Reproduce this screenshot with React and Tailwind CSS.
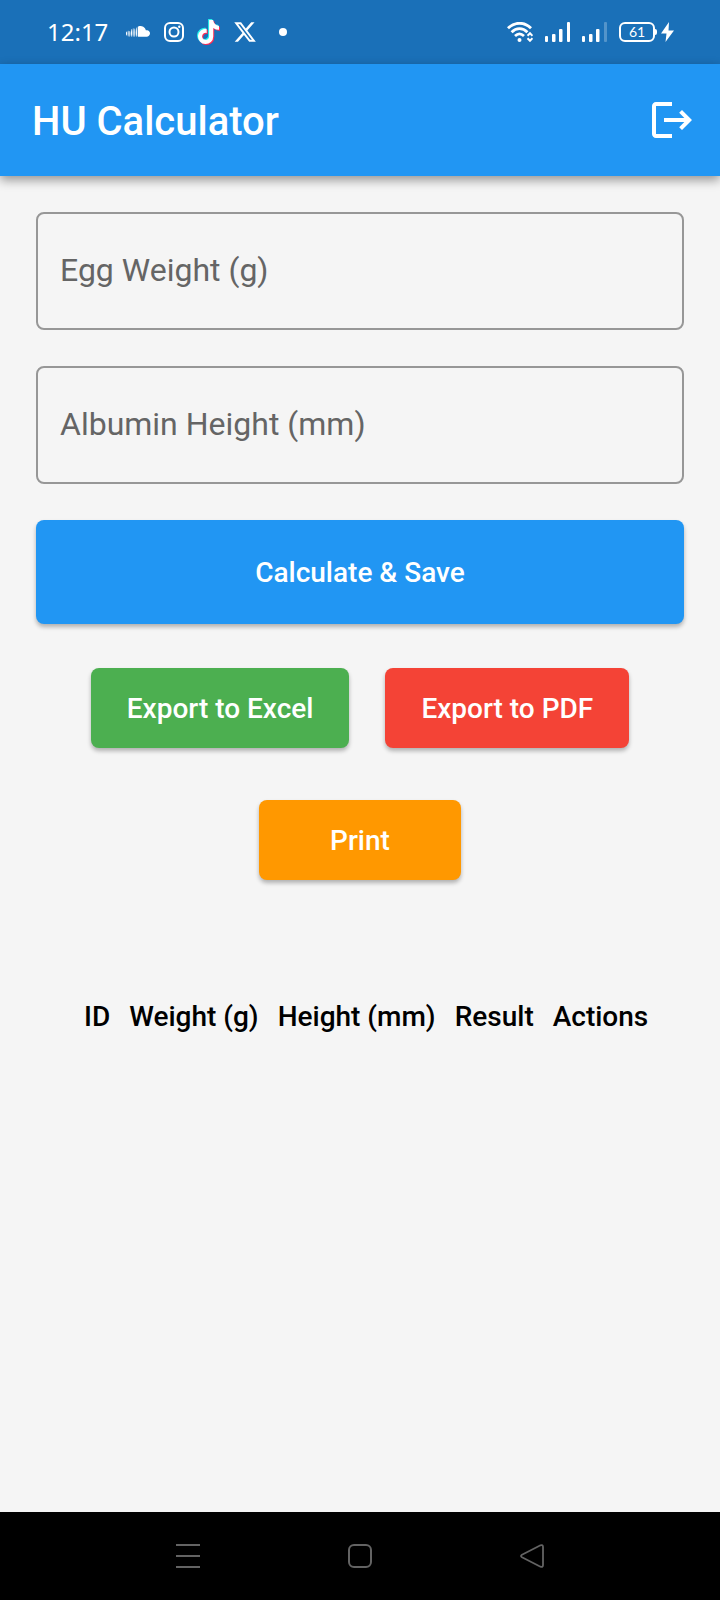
import { FaSoundcloud, FaTiktok, FaXTwitter } from "react-icons/fa6";

function TikTok() {
  return (
    <span className="relative block h-6 w-[21px]">
      <FaTiktok className="absolute -top-px -left-px h-6 w-[21px] text-[#25f4ee]" />
      <FaTiktok className="absolute top-px left-px h-6 w-[21px] text-[#fe2c55]" />
      <FaTiktok className="absolute inset-0 h-6 w-[21px] text-white" />
    </span>
  );
}

function Wifi() {
  return (
    <svg className="h-5 w-[26px]" viewBox="0 0 26 20" fill="none" stroke="currentColor">
      <path d="M1 6.2C7.5-.4 17.500-.4 24 6.200" strokeWidth="2.800" />
      <path d="M4.600 10.200C9.200 5.500 15.800 5.500 20.400 10.200" strokeWidth="2.800" />
      <path d="M8 14C10.700 11.400 14.200 11.400 17 14" strokeWidth="2.800" />
      <circle cx="12.500" cy="18" r="2" fill="currentColor" stroke="none" />
      <path d="M20.500 13.800 23 11.200 25.500 13.800M20.500 16.200 23 18.800 25.500 16.200" strokeWidth="2" />
    </svg>
  );
}

function Signal({ weak }) {
  return (
    <svg className="h-5 w-[25px]" viewBox="0 0 25 20" fill="currentColor">
      <rect x="0" y="14" width="3" height="6" rx="1" />
      <rect x="7" y="12" width="3.500" height="8" rx="1" />
      <rect x="14" y="7" width="3.500" height="13" rx="1" />
      <rect x="22" y="0" width="3" height="20" rx="1" opacity={weak ? 0.25 : 1} />
    </svg>
  );
}

function StatusBar() {
  return (
    <div className="flex h-16 items-center justify-between bg-[#1a70b8] pr-[46px] pl-[47px] text-white">
      <div className="flex items-center">
        <span className="font-['Noto_Sans',sans-serif] text-2xl leading-8">12:17</span>
        <div className="ml-[18px] flex items-center gap-3.5">
          <FaSoundcloud className="h-6 w-6" />
          <svg className="h-5 w-5" viewBox="0 0 20 20" fill="none" stroke="currentColor" strokeWidth="2">
            <rect x="1" y="1" width="18" height="18" rx="5" />
            <circle cx="10" cy="10" r="4.500" />
            <circle cx="15.300" cy="4.700" r="1.200" fill="currentColor" stroke="none" />
          </svg>
          <TikTok />
          <FaXTwitter className="h-6 w-6" />
        </div>
        <span className="ml-[22px] h-2 w-2 rounded-full bg-white" />
      </div>
      <div className="flex items-center gap-3">
        <Wifi />
        <Signal />
        <Signal weak />
        <div className="flex items-center">
          <span className="flex h-5 w-9 items-center justify-center rounded-md border-2 border-white font-['Lato',sans-serif] text-sm leading-4">
            61
          </span>
          <span className="h-1.5 w-0.5 rounded-r-sm bg-white" />
          <svg className="ml-1 h-5 w-[13px]" viewBox="0 0 13 20" fill="currentColor">
            <path d="M8 0 0 11.500H5.500L4.500 20 13 8.500H7.500Z" />
          </svg>
        </div>
      </div>
    </div>
  );
}

function Field({ id, label }) {
  return (
    <div className="grid items-center">
      <input
        id={id}
        inputMode="decimal"
        placeholder=" "
        className="peer col-start-1 row-start-1 h-[118px] w-full rounded-lg border-2 border-[#979797] bg-transparent px-[22px] text-[32px] text-[#212121] focus:border-[#2196f3] focus:outline-none"
      />
      <label
        htmlFor={id}
        className="pointer-events-none col-start-1 row-start-1 px-6 pb-0.5 text-[32px] leading-10 text-[#656565] peer-[:not(:placeholder-shown)]:invisible"
      >
        {label}
      </label>
    </div>
  );
}

const buttonBase =
  "rounded-lg pt-0.5 text-[28px] leading-8 font-medium text-white shadow-[0_3px_4px_rgba(0,0,0,0.28)]";

const columns = ["ID", "Weight (g)", "Height (mm)", "Result", "Actions"];

export default function App() {
  return (
    <div className="flex min-h-screen flex-col bg-[#f5f5f5] font-['Roboto',sans-serif]">
      <StatusBar />
      <header className="flex h-28 items-center justify-between bg-[#2196f3] pr-6 pl-8 text-white shadow-[0_4px_10px_rgba(0,0,0,0.4)]">
        <h1 className="pt-1 text-[40px] leading-12 font-medium">HU Calculator</h1>
        <button type="button" aria-label="Log out">
          <svg className="h-12 w-12" viewBox="0 0 24 24" fill="currentColor">
            <path d="M17 7l-1.410 1.410L18.170 11H8v2h10.170l-2.580 2.580L17 17l5-5zM4 5h8V3H4c-1.100 0-2 .9-2 2v14c0 1.100.9 2 2 2h8v-2H4V5z" />
          </svg>
        </button>
      </header>

      <main className="flex flex-1 flex-col p-9">
        <form className="flex flex-col gap-9" onSubmit={(e) => e.preventDefault()}>
          <Field id="egg-weight" label="Egg Weight (g)" />
          <Field id="albumin-height" label="Albumin Height (mm)" />
          <button type="submit" className={`${buttonBase} h-26 bg-[#2196f3]`}>
            Calculate &amp; Save
          </button>
        </form>

        <div className="mt-11 flex flex-wrap justify-center gap-x-9 gap-y-13">
          <button type="button" className={`${buttonBase} h-20 bg-[#4caf50] px-9`}>
            Export to Excel
          </button>
          <button type="button" className={`${buttonBase} h-20 bg-[#f44336] px-9`}>
            Export to PDF
          </button>
          <button type="button" className={`${buttonBase} h-20 bg-[#ff9800] px-[71px]`}>
            Print
          </button>
        </div>

        <table className="mt-20 ml-12 self-start">
          <thead>
            <tr className="h-28">
              {columns.map((name) => (
                <th key={name} scope="col" className="pt-0.5 pr-[19px] text-left text-[28px] leading-8 font-medium whitespace-nowrap text-black last:pr-0">
                  {name}
                </th>
              ))}
            </tr>
          </thead>
        </table>
      </main>

      <nav className="flex h-22 items-center justify-center gap-37 bg-black text-[#636363]">
        <button type="button" aria-label="Recent apps">
          <svg className="h-6 w-6" viewBox="0 0 24 24" stroke="currentColor" strokeWidth="2">
            <path d="M0 1h24M0 12h24M0 23h24" />
          </svg>
        </button>
        <button type="button" aria-label="Home">
          <svg className="h-6 w-6" viewBox="0 0 24 24" fill="none" stroke="currentColor" strokeWidth="2">
            <rect x="1" y="1" width="22" height="22" rx="5" />
          </svg>
        </button>
        <button type="button" aria-label="Back">
          <svg className="h-6 w-6" viewBox="0 0 24 24" fill="none" stroke="currentColor" strokeWidth="1.800" strokeLinejoin="round">
            <path d="M2 10.700 20.500 1.300Q23 .5 23 3V21Q23 23.500 20.500 22.700L2 13.300Q0 12 2 10.700Z" />
          </svg>
        </button>
      </nav>
    </div>
  );
}
